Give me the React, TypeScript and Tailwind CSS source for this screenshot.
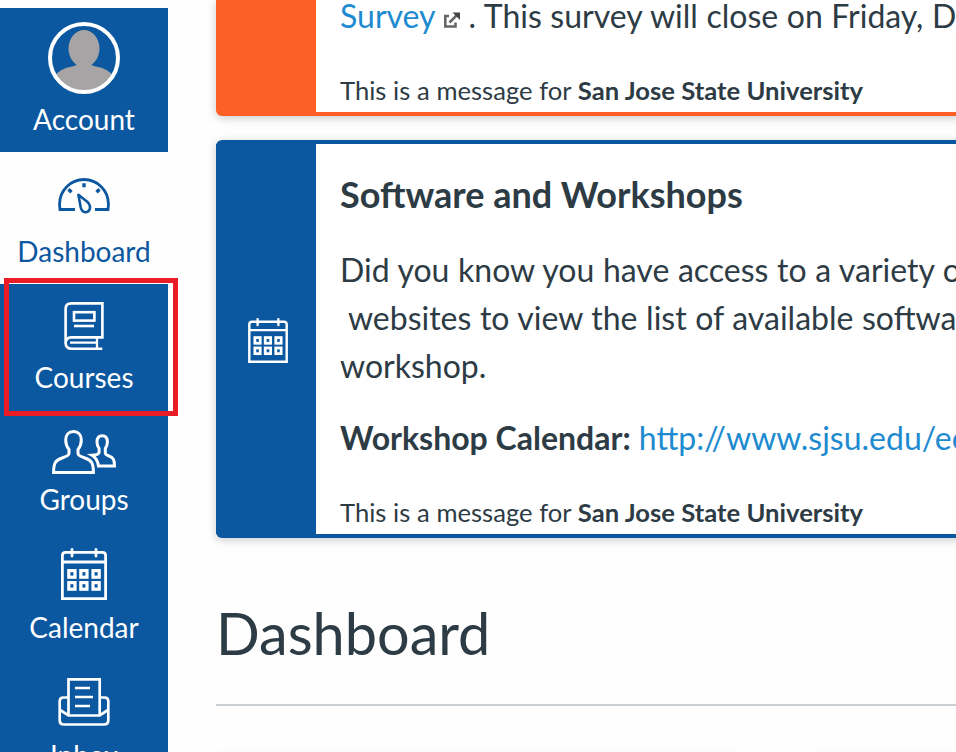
import type { ReactNode } from "react";

function CalendarIcon({ className }: { className: string }) {
  return (
    <svg className={className} viewBox="0 0 46 52" fill="none" stroke="currentColor" strokeWidth="2.8">
      <path d="M1.4 50.6V7.5Q1.4 4.4 4.5 4.4H41.5Q44.6 4.4 44.6 7.5V50.6Z" />
      <path d="M1.4 14H44.6" />
      <path d="M11 1.4V8M35 1.4V8" strokeLinecap="round" />
      <g strokeWidth="3.2">
        {[7.8, 19.8, 32].map((x) =>
          [22.6, 34.6].map((y) => <rect key={`${x}-${y}`} x={x} y={y} width="6.2" height="6.6" />),
        )}
      </g>
    </svg>
  );
}

function Avatar() {
  return (
    <svg className="h-[72px] w-[72px]" viewBox="0 0 72 72">
      <defs>
        <clipPath id="avatar-clip">
          <circle cx="36" cy="36" r="33" />
        </clipPath>
      </defs>
      <g clipPath="url(#avatar-clip)" fill="#a6a4a4">
        <ellipse cx="36" cy="26.500" rx="15.500" ry="18.500" />
        <path d="M29.500 40H42.500Q42 43.500 48 44.500Q60 46.500 65 54V72H7V54Q12 46.500 24 44.500Q30 43.500 29.500 40Z" />
      </g>
      <circle cx="36" cy="36" r="34" fill="none" stroke="white" strokeWidth="4" />
    </svg>
  );
}

function DashboardIcon() {
  return (
    <svg className="h-10 w-14" viewBox="56 176 56 40" fill="none" stroke="currentColor" strokeWidth="2.8">
      <path d="M75 209.500H60Q59.500 206 59.600 203.900A24.400 24.400 0 0 1 108.400 203.900Q108.500 206 108 209.500H95" />
      <path d="M84 183.300V187.300M68.500 189.300L71.500 192.300M99.500 189.300L96.500 192.300" strokeWidth="3.4" />
      <path d="M78.400 194.800L80.700 207.300Q81.800 212.300 85.900 212.300Q90.400 211.300 90 206.300Q89.600 204 87.500 202Z" strokeWidth="2.6" strokeLinejoin="round" />
    </svg>
  );
}

function CoursesIcon() {
  return (
    <svg className="h-12 w-10" viewBox="64 302 40 48" fill="none" stroke="currentColor" strokeWidth="2.6">
      <path d="M65.600 343.500V309Q65.600 303.400 71.200 303.400H102.400V337.400H71.500Q65.600 337.600 65.600 343.100Q65.800 348.700 71.500 348.700H102.300" />
      <path d="M70 342.700H96M97 338V348" strokeWidth="2.300" />
      <rect x="74" y="312.200" width="20.400" height="8.400" />
      <path d="M74 326H94" />
    </svg>
  );
}

function GroupsIcon() {
  return (
    <svg className="h-[46px] w-[66px]" viewBox="51 429 66 46" fill="none" stroke="currentColor" strokeWidth="3" strokeLinejoin="miter">
      <path d="M73.500 431.600C68.500 431.600 65.700 435 65.700 440C65.700 444 67 447 69 449.500V453.500C69 455.500 66 456.500 62 458C55.500 460.200 53.600 463 53.600 472.400H93.400C93.400 463 91.500 460.200 85 458C81 456.500 78 455.500 78 453.500V449.500C80 447 81.300 444 81.300 440C81.300 435 78.500 431.600 73.500 431.600Z" />
      <path d="M98.500 466.100H114.500C114.500 460 113.500 457.500 109 456C106.500 455.200 105.300 454.500 105.300 453V448.500C106.500 447 107.400 444.500 107.400 442C107.400 438 105.500 435.700 102.200 435.700C98.900 435.700 97 438 97 442C97 444.500 97.900 447 99.100 448.500V452.500C98.500 454.500 95 455.200 92 455.300Q97.500 458.500 98.500 466.100Z" />
    </svg>
  );
}

function InboxIcon() {
  return (
    <svg className="h-12 w-[52px]" viewBox="58 678 52 48" fill="none" stroke="currentColor" strokeWidth="2.700">
      <path d="M68.500 714.500V679.400H99.700V714.500" />
      <path d="M68 697.500H63.500Q59.700 697.500 59.700 701.500V720Q59.700 724.500 64 724.500H104Q108.300 724.500 108.300 720V701.500Q108.300 697.500 104.500 697.500H100" />
      <path d="M60 710L68.500 715.500H99.700L108 710M75 688H90M75 697H93M75 706H90" />
    </svg>
  );
}

function NavItem({ className, label, children }: { className: string; label: string; children: ReactNode }) {
  return (
    <a className={`flex shrink-0 flex-col items-center justify-between text-[28px] leading-8 ${className}`}>
      {children}
      <span>{label}</span>
    </a>
  );
}

function Source() {
  return (
    <p className="text-[25.6px] leading-8 [word-spacing:0.15px]">
      This is a message for <b>San Jose State University</b>
    </p>
  );
}

export default function App() {
  return (
    <div className="relative flex h-[752px] w-[956px] overflow-hidden bg-[#fefefe] font-['Lato',sans-serif] text-[#2d3b45]">
      <nav className="mt-2 flex w-[168px] shrink-0 flex-col bg-[#0b57a0] text-white">
        <NavItem className="h-36 pt-3.5 pb-[17px]" label="Account"><Avatar /></NavItem>
        <NavItem className="h-[132px] bg-[#fefefe] pt-6 pb-[17px] text-[#0b57a0]" label="Dashboard"><DashboardIcon /></NavItem>
        <NavItem className="h-32 pt-[18px] pb-[19px]" label="Courses"><CoursesIcon /></NavItem>
        <NavItem className="h-[120px] pt-[17px] pb-[17px]" label="Groups"><GroupsIcon /></NavItem>
        <NavItem className="h-32 pt-4 pb-[17px]" label="Calendar"><CalendarIcon className="h-[52px] w-[46px]" /></NavItem>
        <NavItem className="h-32 pt-[18px] pb-[17px]" label="Inbox"><InboxIcon /></NavItem>
      </nav>

      <main className="ml-12 flex w-[820px] shrink-0 flex-col whitespace-nowrap">
        <section className="flex h-[116px] shrink-0 rounded-b-md border-b-4 border-[#fc6027] bg-white shadow-[0_2px_10px_rgba(0,0,0,0.2)]">
          <div className="w-[100px] shrink-0 rounded-bl-[2px] bg-[#fc6027]" />
          <div className="flex flex-col justify-between pb-1.5 pl-6">
            <p className="-mt-2 text-[32px] leading-[48px] [word-spacing:0.4px]">
              <span className="text-[#1e8bd0]">Survey</span>
              <svg className="mr-2 ml-[7px] inline h-[18px] w-[18px] align-[-2px]" viewBox="0 0 18 18" fill="none" stroke="#666" strokeWidth="2.600">
                <path d="M6 4H2.300V14.500H12.500V10.500M6.500 10.500L14 3" />
                <path d="M9.500 0.500H17V8Z" fill="#444" stroke="none" />
              </svg>
              . This survey will close on Friday, December
            </p>
            <Source />
          </div>
        </section>

        <section className="mt-6 flex h-[398px] shrink-0 rounded-md border-y-4 border-[#0b57a0] bg-white shadow-[0_2px_10px_rgba(0,0,0,0.2)]">
          <div className="flex w-[100px] shrink-0 items-center justify-center bg-[#0b57a0] pt-0.5 pl-1 text-white">
            <CalendarIcon className="h-[45px] w-10" />
          </div>
          <div className="flex flex-col pt-[26px] pl-6">
            <h2 className="text-[36px] leading-[48px] font-bold">Software and Workshops</h2>
            <p className="mt-7 text-[32px] leading-[48px] [word-spacing:0.4px]">
              Did you know you have access to a variety of software?
              <br />
              &nbsp;websites to view the list of available software and
              <br />
              workshop.
            </p>
            <p className="mt-6 mb-[34px] text-[32px] leading-[48px]">
              <b>Workshop Calendar:</b> <span className="text-[#1e8bd0]">http://www.sjsu.edu/ecampus</span>
            </p>
            <Source />
          </div>
        </section>

        <header className="mt-14 flex h-28 shrink-0 items-center border-b-2 border-[#c7cdd1] pb-8">
          <h1 className="text-[57.6px] leading-[72px]">Dashboard</h1>
        </header>
        <div className="mt-[48px] flex shrink-0 gap-[72px]">
          <div className="h-20 w-[524px] shrink-0 rounded-md bg-white shadow-[0_2px_8px_rgba(0,0,0,0.1)]" />
          <div className="h-20 w-[524px] shrink-0 rounded-md bg-white shadow-[0_2px_8px_rgba(0,0,0,0.1)]" />
        </div>
      </main>

      <div className="absolute top-[278px] left-1 h-[138px] w-[174px] border-[5px] border-[#ea1c26]" />
    </div>
  );
}
